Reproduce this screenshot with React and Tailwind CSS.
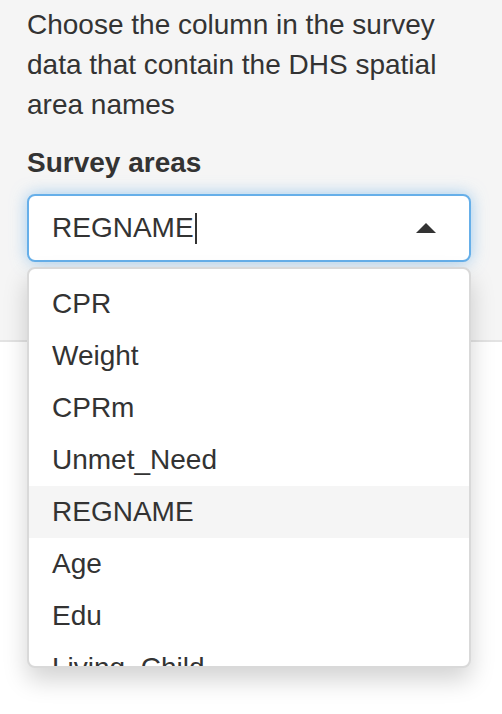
import React from "react";

const items = ["CPR", "Weight", "CPRm", "Unmet_Need", "REGNAME", "Age", "Edu", "Living_Child"];

export default function App() {
  return (
    <div
      className="relative w-[502px] h-[714px] bg-white text-[#333] overflow-hidden"
      style={{ fontFamily: '"Liberation Sans", Arial, sans-serif' }}
    >
      <div className="bg-[#f5f5f5] border-b-2 border-[#e3e3e3] h-[342px] pl-[27px] pr-[31px] pt-[5px]">
        <p className="text-[28px] leading-[40px] m-0">
          Choose the column in the survey data that contain the DHS spatial area names
        </p>
        <div className="mt-[18px] text-[28px] leading-[40px] font-bold">Survey areas</div>
        <div className="mt-[11px] h-[68px] bg-white border-2 border-[#66afe9] rounded-[8px] shadow-[0_0_16px_rgba(102,175,233,0.6)] flex items-center pl-[23px] pr-[33px]">
          <span className="text-[28px] leading-[40px]">REGNAME</span>
          <span className="w-[2px] h-[31px] bg-[#333] ml-[1px]" />
          <span className="ml-auto w-0 h-0 border-l-[10px] border-r-[10px] border-b-[10px] border-l-transparent border-r-transparent border-b-[#333]" />
        </div>
      </div>
      <div className="absolute left-[27px] top-[267px] w-[444px] h-[401px] bg-white border-2 border-[#d9d9d9] rounded-[8px] shadow-[0_12px_24px_rgba(0,0,0,0.175)] overflow-hidden pt-[9px]">
        {items.map((it) => (
          <div
            key={it}
            className={
              "h-[52px] pl-[23px] flex items-center text-[28px] leading-[40px] " +
              (it === "REGNAME" ? "bg-[#f5f5f5]" : "")
            }
          >
            {it}
          </div>
        ))}
      </div>
    </div>
  );
}
